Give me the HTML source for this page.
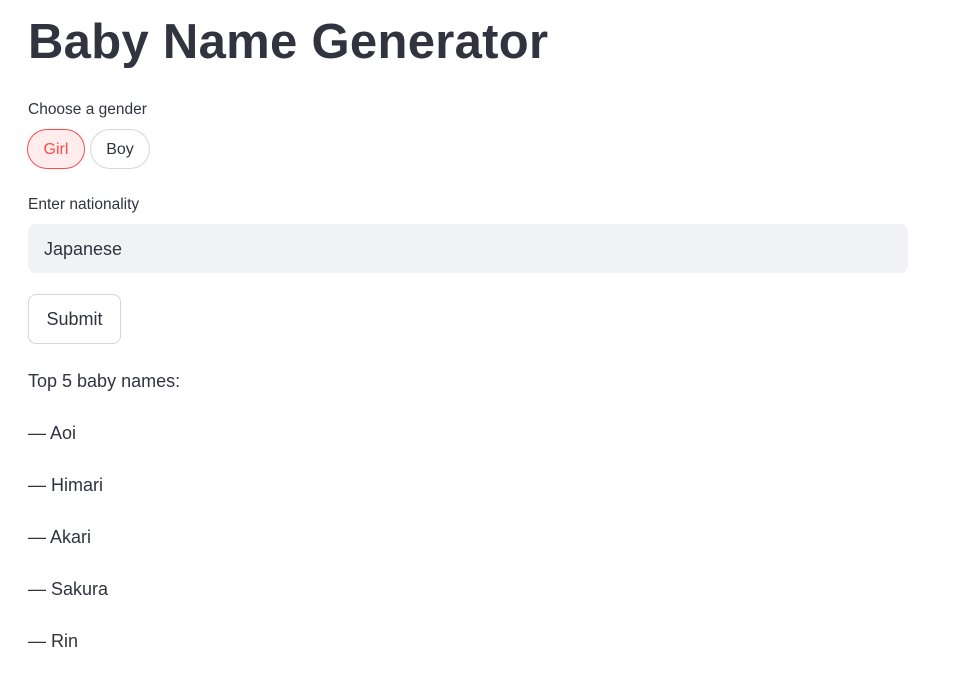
<!DOCTYPE html>
<html><head><meta charset="utf-8"><style>
body{margin:0;width:953px;height:682px;background:#fff;font-family:"Liberation Sans",sans-serif;color:#31333f;position:relative;overflow:hidden}
.a{position:absolute;white-space:nowrap}
h1{position:absolute;left:28px;top:12px;margin:0;font-size:49px;font-weight:bold;letter-spacing:0.3px;line-height:60px}
.lbl{font-size:15.5px}
.pill{position:absolute;top:129px;height:40px;border-radius:20px;box-sizing:border-box;font-size:16px;line-height:40px;text-align:center}
.t{font-size:18px}
</style></head><body>
<h1>Baby Name Generator</h1>
<div class="a lbl" style="left:28px;top:101px">Choose a gender</div>
<div class="pill" style="left:27px;width:58px;border:1px solid #ff4b4b;background:#ffeded;color:#ff4b4b">Girl</div>
<div class="pill" style="left:90px;width:60px;border:1px solid #d6d6d9;color:#31333f">Boy</div>
<div class="a lbl" style="left:28px;top:196px">Enter nationality</div>
<div class="a" style="left:28px;top:224px;width:880px;height:49px;background:#f0f2f6;border-radius:8px"></div>
<div class="a t" style="left:44px;top:239px">Japanese</div>
<div class="a" style="left:28px;top:294px;width:93px;height:50px;box-sizing:border-box;border:1px solid #d6d6d9;border-radius:8px;text-align:center;line-height:48px;font-size:18px">Submit</div>
<div class="a t" style="left:28px;top:371px">Top 5 baby names:</div>
<div class="a t" style="left:28px;top:423px">— Aoi</div>
<div class="a t" style="left:28px;top:475px">— Himari</div>
<div class="a t" style="left:28px;top:527px">— Akari</div>
<div class="a t" style="left:28px;top:579px">— Sakura</div>
<div class="a t" style="left:28px;top:631px">— Rin</div>
</body></html>
